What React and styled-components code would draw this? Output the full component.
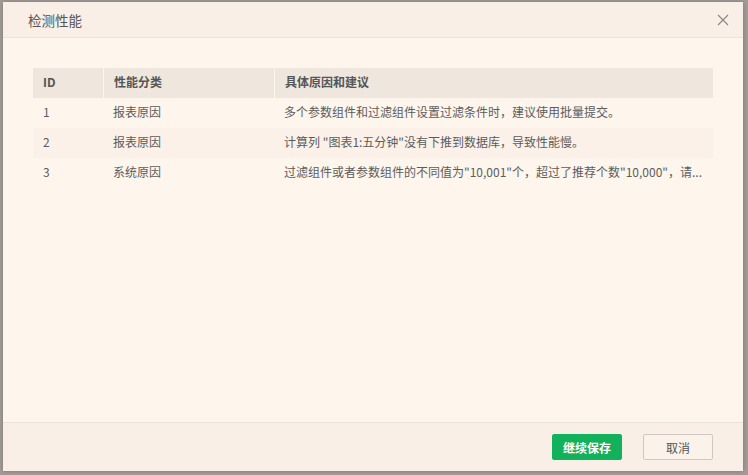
import React from 'react'
import styled, { createGlobalStyle } from 'styled-components'

const GlobalStyle = createGlobalStyle`
  html, body {
    margin: 0;
    padding: 0;
    background: #a19c98;
    font-family: "Noto Sans CJK SC", "Open Sans", sans-serif;
  }
`

// gray backdrop behind the dialog
const Backdrop = styled.div`
  width: 748px;
  height: 475px;
  padding: 2px 5px 4px 3px;
  box-sizing: border-box;
  background: #a19c98;
`

const Dialog = styled.div`
  width: 740px;
  height: 469px;
  display: flex;
  flex-direction: column;
  background: #fef5ec;
  box-shadow: 0 0 4px rgba(0, 0, 0, 0.25);
`

const Header = styled.div`
  height: 35px;
  flex-shrink: 0;
  display: flex;
  align-items: center;
  justify-content: space-between;
  padding: 0 14px 0 25px;
  background: #f9efe6;
  border-bottom: 1px solid #ece2d9;
`

const Title = styled.span`
  font-size: 13.5px;
  color: #555;
`

const Close = styled.button`
  border: none;
  background: none;
  padding: 0;
  display: flex;
  cursor: pointer;
`

const Body = styled.div`
  flex: 1;
  padding: 30px 30px 0 30px;
`

const Table = styled.div`
  display: grid;
  grid-template-columns: 70px 171px 1fr;
  font-size: 12px;
  color: #555;
`

const Cell = styled.div`
  height: 30px;
  line-height: 28px;
  padding: 0 10px;
  box-sizing: border-box;
  white-space: nowrap;
  background: ${p => (p.$head ? '#efe6dd' : p.$alt ? '#fbf1e8' : 'transparent')};
  border-left: ${p => (p.$head && !p.$first ? '1px solid #fdf6ef' : 'none')};
  font-weight: ${p => (p.$head ? 600 : 400)};
  color: ${p => (p.$head ? '#555' : '#5c5c5c')};
`

const Footer = styled.div`
  height: 48px;
  flex-shrink: 0;
  display: flex;
  align-items: center;
  justify-content: flex-end;
  gap: 21px;
  padding: 0 30px 0 0;
  background: #f9efe6;
  border-top: 1px solid #ece2d9;
`

const Button = styled.button`
  width: 70px;
  height: 26px;
  box-sizing: border-box;
  font-family: inherit;
  font-size: 12px;
  border-radius: 2px;
  cursor: pointer;
  background: ${p => (p.$primary ? '#12b15c' : '#fbf2ea')};
  color: ${p => (p.$primary ? '#fff' : '#555')};
  border: 1px solid ${p => (p.$primary ? '#12b15c' : '#cfc8c2')};
  font-weight: ${p => (p.$primary ? 600 : 400)};
`

const rows = [
  ['1', '报表原因', '多个参数组件和过滤组件设置过滤条件时，建议使用批量提交。'],
  ['2', '报表原因', '计算列 "图表1:五分钟"没有下推到数据库，导致性能慢。'],
  ['3', '系统原因', '过滤组件或者参数组件的不同值为"10,001"个，超过了推荐个数"10,000"，请...'],
]

export default function App() {
  return (
    <>
      <GlobalStyle />
      <Backdrop>
        <Dialog>
          <Header>
            <Title>检测性能</Title>
            <Close>
              <svg width="12" height="12" viewBox="0 0 12 12">
                <path d="M1 1L11 11M11 1L1 11" stroke="#8a8582" strokeWidth="1.1" />
              </svg>
            </Close>
          </Header>
          <Body>
            <Table>
              <Cell $head $first>ID</Cell>
              <Cell $head>性能分类</Cell>
              <Cell $head>具体原因和建议</Cell>
              {rows.map((r, i) =>
                r.map((c, j) => (
                  <Cell key={i + '-' + j} $alt={i % 2 === 1}>{c}</Cell>
                ))
              )}
            </Table>
          </Body>
          <Footer>
            <Button $primary>继续保存</Button>
            <Button>取消</Button>
          </Footer>
        </Dialog>
      </Backdrop>
    </>
  )
}
